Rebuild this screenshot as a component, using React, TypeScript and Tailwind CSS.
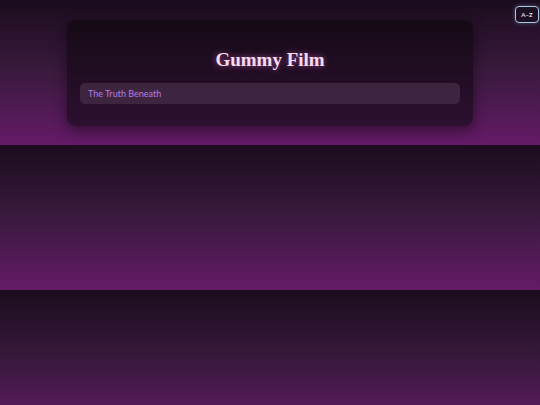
export default function App() {
  return (
    <div className="relative min-h-[405px] bg-[linear-gradient(180deg,#1b0c1e_0%,#3a1a3e_50%,#651a68_100%)] bg-[length:100%_145px] bg-repeat-y font-['Lato','Open_Sans',sans-serif]">
      <button className="absolute right-[1px] top-[6px] flex h-[17px] w-[24px] items-center justify-center rounded-[4px] border border-[#a9c9e6] bg-[#1e1024] text-[6px] font-bold text-[#e5e0f0] shadow-[0_0_4px_rgba(140,180,230,0.4)]">
        A–Z
      </button>
      <div className="flex justify-center pt-[20px]">
        <div className="w-[406px] rounded-[8px] bg-[linear-gradient(180deg,#150a16_0%,#2d1030_100%)] px-[13px] pb-[22px] pt-[26px] shadow-[0_4px_14px_rgba(0,0,0,0.45)]">
          <h1 className="text-center font-['Liberation_Serif',serif] text-[19px] font-bold leading-[28px] text-[#f6dcef] [text-shadow:0_0_6px_rgba(236,120,220,0.6)]">
            Gummy Film
          </h1>
          <div className="mt-[9px] flex h-[21px] items-center rounded-[5px] bg-[#3d2540] px-[8px] text-[9px] text-[#b87ae4]">
            The Truth Beneath
          </div>
        </div>
      </div>
    </div>
  );
}
